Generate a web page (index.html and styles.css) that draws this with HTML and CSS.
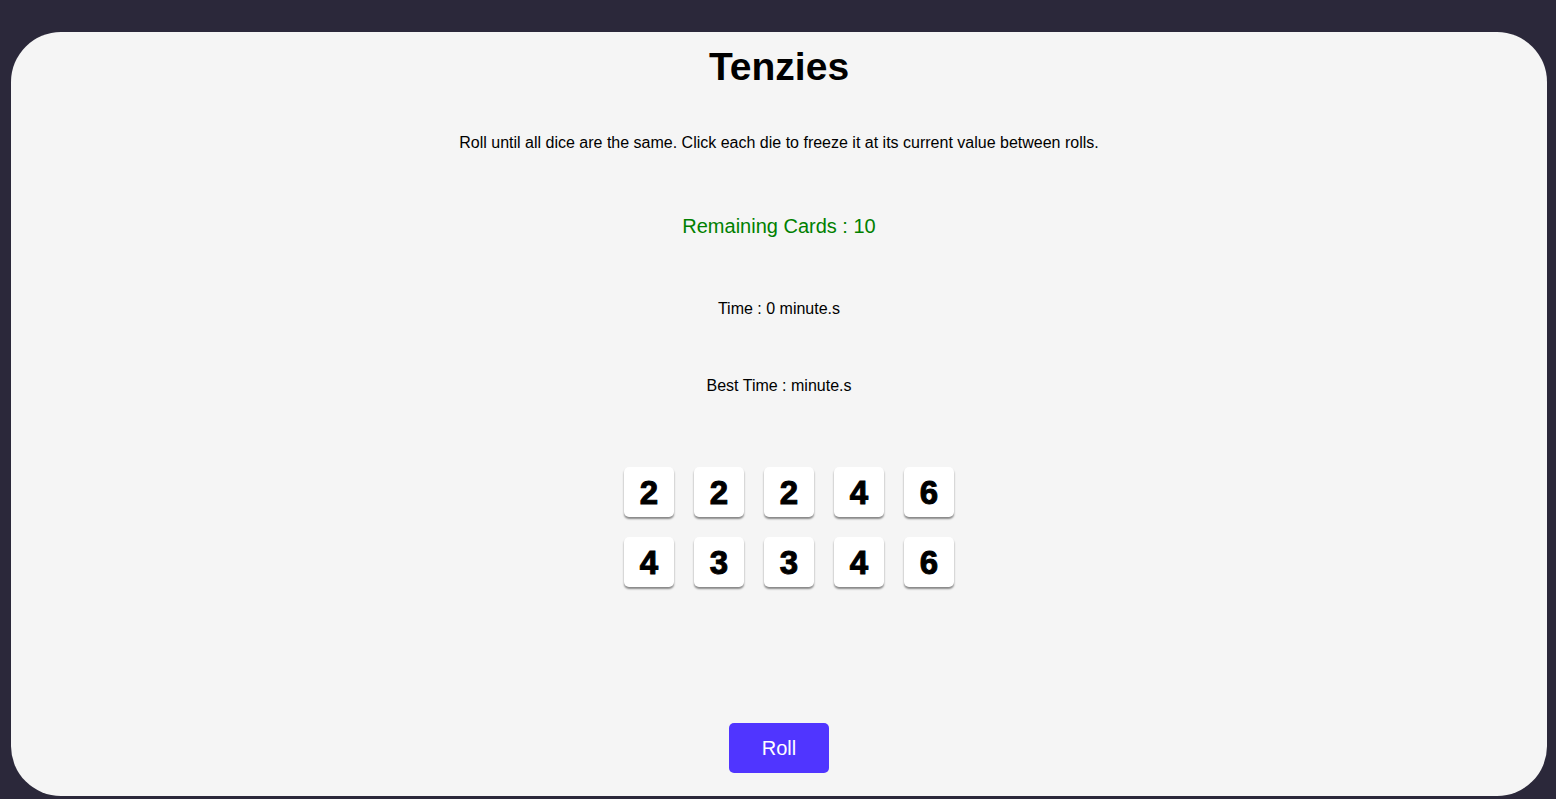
FILE: index.html
```html
<!DOCTYPE html>
<html lang="en">
<head>
<meta charset="utf-8">
<title>Tenzies</title>
<link rel="stylesheet" href="styles.css">
</head>
<body>
<main class="card">
  <h1 class="title">Tenzies</h1>
  <p class="instructions">Roll until all dice are the same. Click each die to freeze it at its current value between rolls.</p>
  <h3 class="remaining">Remaining Cards : 10</h3>
  <p class="time">Time : 0 minute.s</p>
  <p class="best">Best Time : minute.s</p>
  <div class="dice">
    <div class="die">2</div>
    <div class="die">2</div>
    <div class="die">2</div>
    <div class="die">4</div>
    <div class="die">6</div>
    <div class="die">4</div>
    <div class="die">3</div>
    <div class="die">3</div>
    <div class="die">4</div>
    <div class="die">6</div>
  </div>
  <button class="roll">Roll</button>
</main>
</body>
</html>
```
FILE: styles.css
```css
html, body {
  margin: 0;
  padding: 0;
}
body {
  background: #2b283a;
  font-family: "Liberation Sans", Arial, sans-serif;
  color: #000;
  padding: 32px 9px 3px 11px;
  height: 799px;
  box-sizing: border-box;
  overflow: hidden;
}
.card {
  background: #f5f5f5;
  border-radius: 50px;
  width: 1536px;
  height: 764px;
  box-sizing: border-box;
  display: flex;
  flex-direction: column;
  align-items: center;
}
.title {
  margin: 12px 0 0;
  font-size: 39px;
  line-height: 46px;
  font-weight: 700;
}
.instructions {
  margin: 44px 0 0;
  font-size: 16px;
  line-height: 18px;
}
.remaining {
  margin: 63px 0 0;
  font-size: 20px;
  line-height: 23px;
  font-weight: 400;
  color: #008000;
}
.time {
  margin: 62px 0 0;
  font-size: 16px;
  line-height: 18px;
}
.best {
  margin: 59px 0 0;
  font-size: 16px;
  line-height: 18px;
}
.dice {
  margin: 72px 0 0 20px;
  display: grid;
  grid-template-columns: repeat(5, 50px);
  grid-auto-rows: 50px;
  gap: 20px;
}
.die {
  background: #fff;
  border-radius: 5px;
  box-shadow: 0 2px 2px rgba(0, 0, 0, 0.45);
  display: flex;
  align-items: center;
  justify-content: center;
  font-size: 33px;
  font-weight: 700;
  -webkit-text-stroke: 1px #000;
  line-height: 1;
}
.roll {
  margin-top: 136px;
  width: 100px;
  height: 50px;
  border: none;
  border-radius: 5px;
  background: #5035ff;
  color: #fff;
  font-family: "Liberation Sans", Arial, sans-serif;
  font-size: 20px;
  padding: 0;
  cursor: pointer;
}
```
